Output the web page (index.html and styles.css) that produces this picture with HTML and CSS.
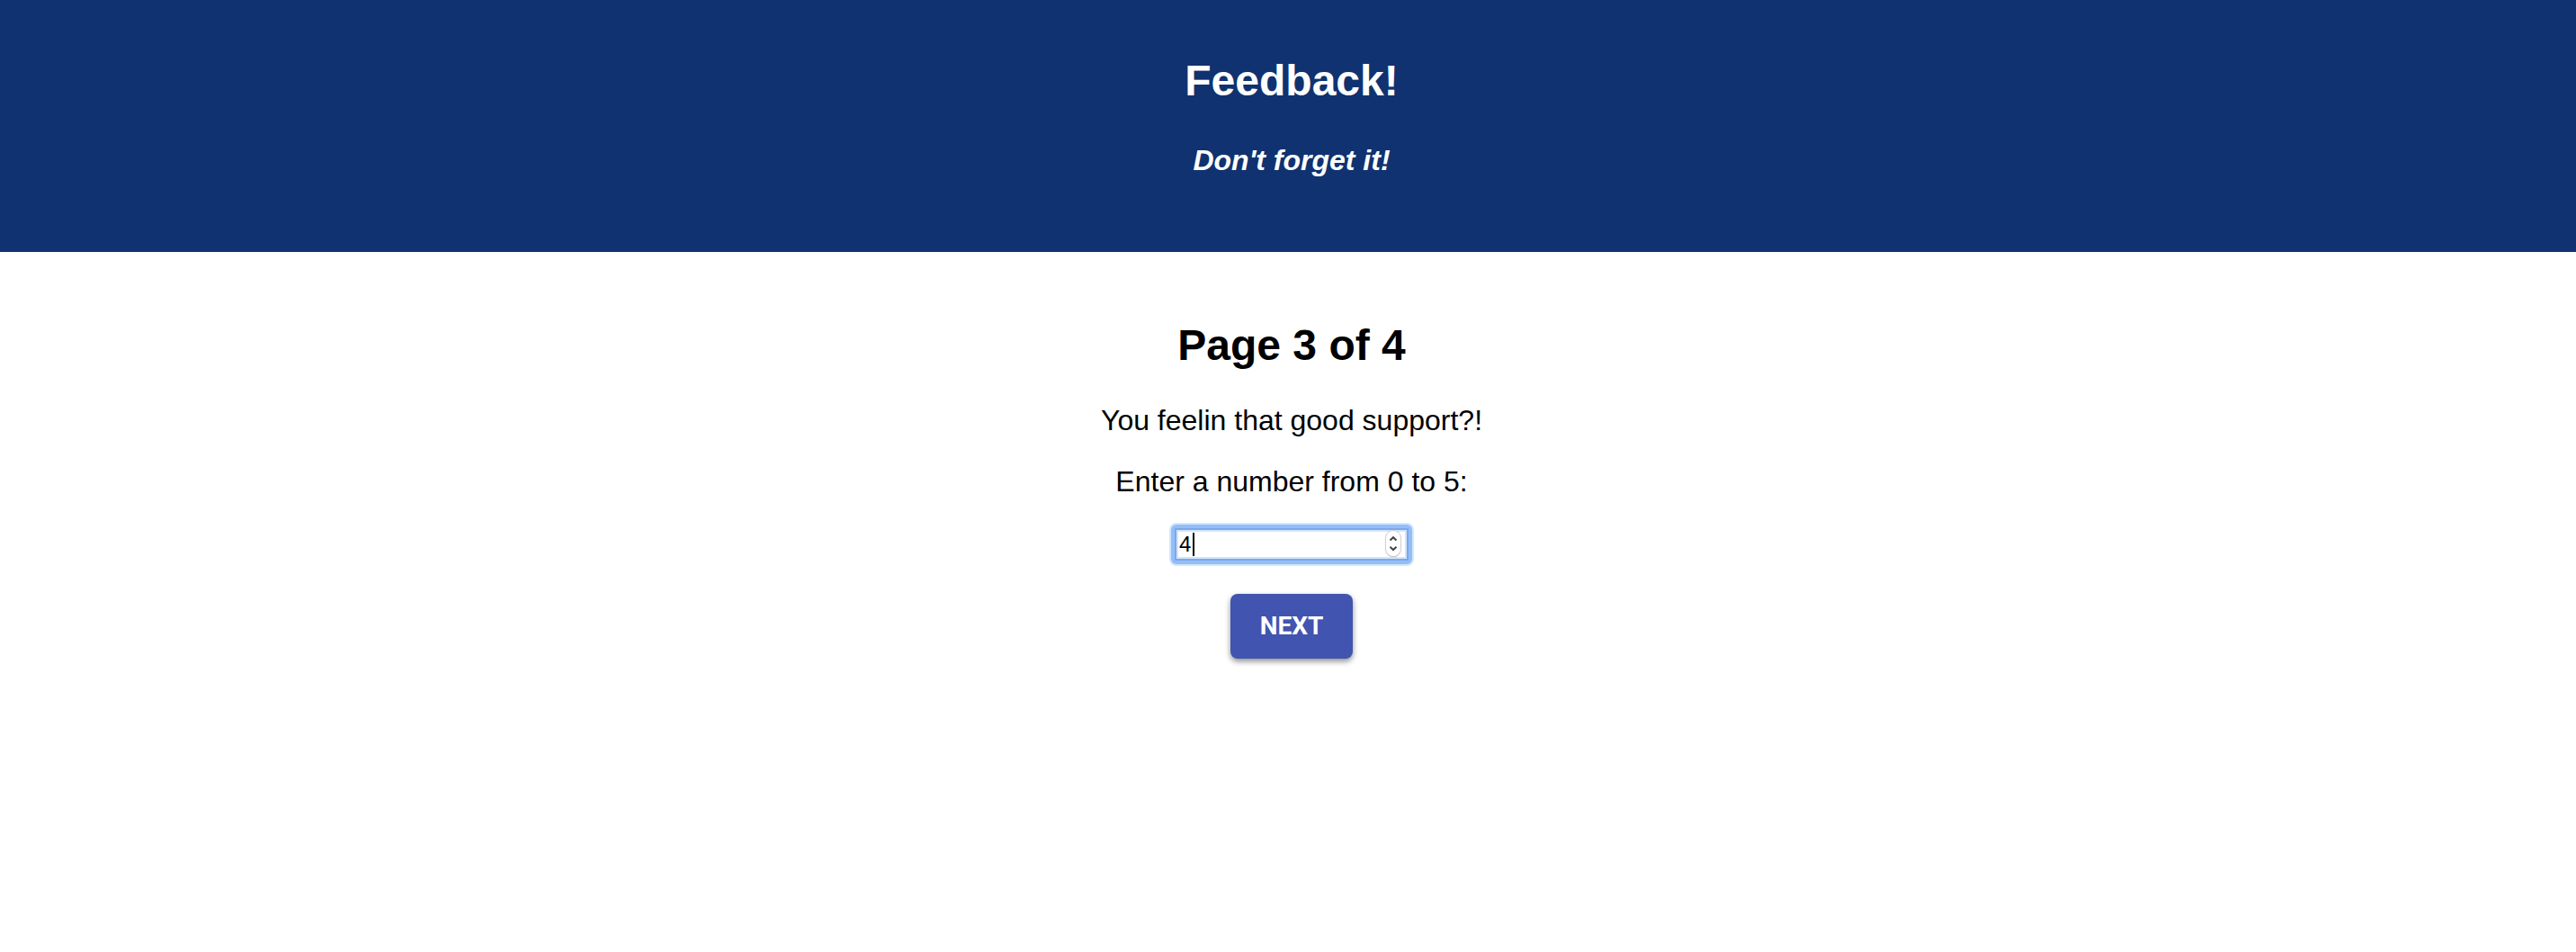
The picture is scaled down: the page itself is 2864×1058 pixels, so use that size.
FILE: index.html
```html
<!DOCTYPE html>
<html lang="en">
<head>
<meta charset="utf-8">
<meta name="viewport" content="width=device-width, initial-scale=1">
<title>Feedback!</title>
<link rel="stylesheet" href="styles.css">
</head>
<body>
<header class="banner">
  <h1 class="title">Feedback!</h1>
  <p class="tagline">Don't forget it!</p>
</header>
<main>
  <form class="survey">
    <h2 class="title">Page 3 of 4</h2>
    <p class="question">You feelin that good support?!</p>
    <label class="question prompt" for="support">Enter a number from 0 to 5:</label>
    <div class="field">
      <input class="number" id="support" type="number" min="0" max="5" value="4">
      <span class="caret"></span>
      <svg class="stepper" viewBox="0 0 16 28" aria-hidden="true">
        <path d="M4.500 10.500L8 7.200L11.500 10.500M4.500 17.800L8 21.100L11.500 17.800" fill="none" stroke="#444" stroke-width="2"/>
      </svg>
    </div>
    <button class="next" type="button">NEXT</button>
  </form>
</main>
</body>
</html>
```
FILE: styles.css
```css
* {
  box-sizing: border-box;
}

body {
  margin: 0;
  background: #fff;
  color: #000;
  font-family: "Liberation Sans", Arial, sans-serif;
  text-align: center;
}

.banner {
  padding: 62px 0 84px 8px;
  background: #103270;
  color: #fff;
}

.title {
  margin: 0;
  font-size: 48px;
  line-height: 56px;
  font-weight: bold;
}

.tagline {
  margin: 42px 0 0;
  font-size: 32px;
  line-height: 36px;
  font-weight: bold;
  font-style: italic;
}

.survey {
  display: flex;
  flex-direction: column;
  align-items: center;
  padding: 76px 0 32px 8px;
}

.question {
  margin: 37px 0 0;
  font-size: 32px;
  line-height: 36px;
}

.prompt {
  margin-top: 32px;
}

.field {
  position: relative;
  width: 268px;
  margin: 30px 0 33px;
  padding: 4px;
  border-radius: 6px;
  background: #92bef9;
  box-shadow: 0 0 0 2px #d3e5fd;
}

.number {
  display: block;
  width: 100%;
  height: 36px;
  padding: 0 30px 0 0;
  border: 2px solid #7ca9e6;
  border-radius: 0;
  outline: none;
  background: #fff;
  box-shadow: inset 0 0 0 2px #d3e5fd;
  color: #000;
  font: 24px/32px "Liberation Sans", Arial, sans-serif;
  text-indent: 3px;
  appearance: textfield;
}

.number::-webkit-inner-spin-button {
  display: none;
}

.caret {
  position: absolute;
  top: 9px;
  left: 24px;
  width: 2px;
  height: 26px;
  background: #000;
}

.stepper {
  position: absolute;
  top: 7px;
  right: 13px;
  width: 16px;
  height: 28px;
  border-radius: 8px;
  background: #fff;
  box-shadow: 0 0 1px 1px #ccc, 0 1px 1px #aaa;
  pointer-events: none;
}

.next {
  width: 136px;
  height: 72px;
  padding: 0;
  border: 0;
  border-radius: 8px;
  background: #4054b0;
  box-shadow: 0 3px 6px rgba(0, 0, 0, 0.45);
  color: #fff;
  font: bold 28px/32px Roboto, sans-serif;
}
```
